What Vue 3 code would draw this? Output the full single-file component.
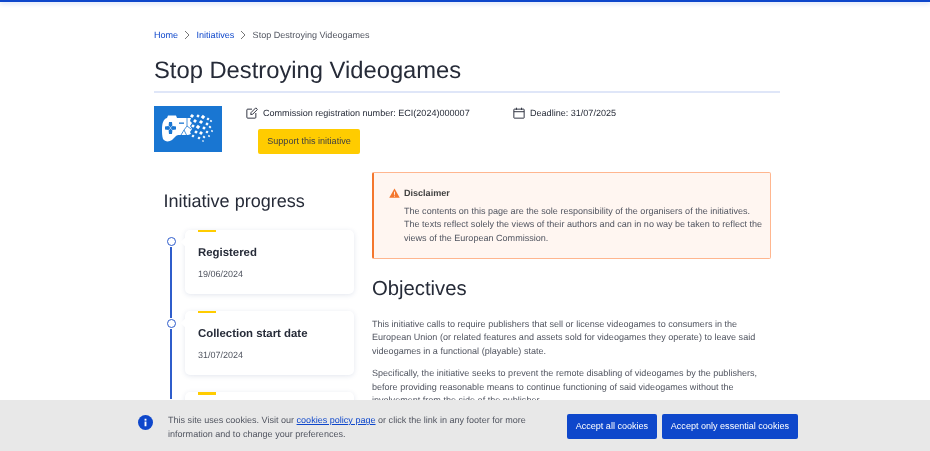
<script setup>
const steps = [
  { title: 'Registered', date: '19/06/2024' },
  { title: 'Collection start date', date: '31/07/2024' },
  { title: 'Collection closed', date: '31/07/2025' },
]
const bits = [[38,10,1.5],[44,10,1.2],[49,11,1.6],[54,13,1.1],[41,15,1.4],[47,16,1.5],[53,18,1.2],[57,15,.9],[39,20,1.3],[44,21,1.6],[50,22,1.3],[56,21,1],[42,26,1.3],[47,27,1.4],[53,26,1.1],[58,25,.8],[39,30,1.1],[45,32,1.1],[50,31,1],[55,30,.8],[49,35,.7]]
</script>

<template>
  <div class="page">
    <div class="topbar"></div>
    <main class="container">
      <nav class="crumbs">
        <a>Home</a>
        <svg class="chev" viewBox="0 0 8 10"><path d="M2 1l4 4-4 4" /></svg>
        <a>Initiatives</a>
        <svg class="chev" viewBox="0 0 8 10"><path d="M2 1l4 4-4 4" /></svg>
        <span>Stop Destroying Videogames</span>
      </nav>
      <h1>Stop Destroying Videogames</h1>
      <div class="meta">
        <svg class="logo" viewBox="0 0 68 46">
          <rect width="68" height="46" fill="#1976d2" />
          <path fill="#fff" d="M13 12l1-2.500h8l1 2.500h14l-1 3 2 2-2 3 2 3-2 3 1 2-3 1H25c-1 0-2 0-3 1l-4 4c-3 2-7 2-9-1-1-3-1-6-1-9 0-6 1-11 5-12z" />
          <path fill="#1976d2" d="M15 16h3l.4 3.500-1.900 1.900-1.900-1.900zM15 28h3l.4-3.500-1.900-1.900-1.900 1.900zM11 20.500v3l3.500.4 1.900-1.900-1.900-1.900zM22 20.500v3l-3.500.4-1.900-1.900 1.900-1.900z" />
          <rect x="25" y="16.500" width="5" height="1.300" fill="#1976d2" />
          <path d="M33 12v8l-3 4 3 6M33 20l4 3M30 24l-3 5" stroke="#1976d2" stroke-width=".8" fill="none" />
          <rect v-for="(b, i) in bits" :key="i" :x="b[0] - b[2]" :y="b[1] - b[2]" :width="b[2] * 2" :height="b[2] * 2" :transform="`rotate(40 ${b[0]} ${b[1]})`" fill="#fff" />
        </svg>
        <div class="meta-body">
          <div class="meta-row">
            <span class="meta-item reg">
              <svg class="ico" viewBox="0 0 14 14"><path d="M7 2.500H2a1 1 0 0 0-1 1V12a1 1 0 0 0 1 1h8.500a1 1 0 0 0 1-1V7M5.500 8.800l.4-2.300L11.400 1l1.900 1.900-5.500 5.500z" /></svg>
              Commission registration number: ECI(2024)000007
            </span>
            <span class="meta-item">
              <svg class="ico" viewBox="0 0 14 14"><path d="M1.500 2.500h11a.5.5 0 0 1 .5.500v9.500a.5.5 0 0 1-.5.500h-11a.5.5 0 0 1-.5-.5V3a.5.5 0 0 1 .5-.5zM1 5.500h12M4 .8v2.500M10 .8v2.500" /></svg>
              Deadline: 31/07/2025
            </span>
          </div>
          <button class="support">Support this initiative</button>
        </div>
      </div>
      <div class="columns">
        <aside class="side">
          <h2>Initiative progress</h2>
          <ol class="timeline">
            <li v-for="s in steps" :key="s.title" class="step">
              <div class="rail"><span class="node"></span><span class="line"></span></div>
              <div class="card">
                <h3>{{ s.title }}</h3>
                <p>{{ s.date }}</p>
              </div>
            </li>
          </ol>
        </aside>
        <section class="content">
          <div class="alert">
            <svg class="warn" viewBox="0 0 12 11"><path d="M6 0.500L11.800 10.800H0.200z" fill="#f4772e" /><path d="M6 4v3.500M6 8.500v1" stroke="#fff6f1" stroke-width="1" /></svg>
            <div>
              <strong>Disclaimer</strong>
              <p>The contents on this page are the sole responsibility of the organisers of the initiatives. The texts reflect solely the views of their authors and can in no way be taken to reflect the views of the European Commission.</p>
            </div>
          </div>
          <h2 class="objectives">Objectives</h2>
          <p class="para">This initiative calls to require publishers that sell or license videogames to consumers in the European Union (or related features and assets sold for videogames they operate) to leave said videogames in a functional (playable) state.</p>
          <p class="para">Specifically, the initiative seeks to prevent the remote disabling of videogames by the publishers, before providing reasonable means to continue functioning of said videogames without the involvement from the side of the publisher.</p>
        </section>
      </div>
    </main>
    <div class="cookies">
      <svg class="info" viewBox="0 0 16 16"><circle cx="8" cy="8" r="8" fill="#0e47cb" /><rect x="7" y="7" width="2" height="5" fill="#fff" /><rect x="7" y="4" width="2" height="2" fill="#fff" /></svg>
      <p>This site uses cookies. Visit our <a>cookies policy page</a> or click the link in any footer for more information and to change your preferences.</p>
      <div class="cookie-actions">
        <button>Accept all cookies</button>
        <button>Accept only essential cookies</button>
      </div>
    </div>
  </div>
</template>

<style>
html, body { margin: 0; overflow: hidden; background: #fff; }
</style>

<style scoped>
.page {
  position: relative;
  width: 930px;
  height: 451px;
  overflow: hidden;
  background: #fff;
  font-family: "Liberation Sans", Arial, sans-serif;
  color: #262b38;
  text-rendering: geometricPrecision;
  filter: blur(.35px);
}
.topbar {
  height: 1.500px;
  background: #0e47cb;
  box-shadow: 0 1px 5px rgba(14, 71, 203, .3);
}
.container { width: 626px; margin-left: 154px; }
.crumbs {
  display: flex;
  align-items: center;
  height: 14px;
  margin-top: 26.500px;
  font-size: 9.050px;
  color: #515560;
}
.crumbs a { color: #0e47cb; }
.chev { width: 8px; height: 10px; margin: 0 5.200px; fill: none; stroke: #666; stroke-width: .9; }
h1 {
  margin: 12px 0 0;
  padding-bottom: 3px;
  border-bottom: 2px solid #dfe6f8;
  font-size: 23.750px;
  line-height: 34px;
  font-weight: 400;
}
.meta { display: flex; margin-top: 13px; }
.logo { width: 68px; height: 46px; flex: none; }
.meta-body { margin-left: 24px; }
.meta-row { display: flex; height: 14px; }
.meta-item { display: flex; align-items: center; gap: 5px; font-size: 9.050px; color: #262b38; }
.reg { width: 267px; }
.ico { width: 12px; height: 12px; fill: none; stroke: #262b38; stroke-width: 1.100; }
.support {
  display: block;
  margin: 9px 0 0 12px;
  width: 102px;
  height: 24.500px;
  padding: 0;
  border: 0;
  border-radius: 2px;
  background: #ffcc00;
  color: #404040;
  font: 9.050px "Liberation Sans", Arial, sans-serif;
}
.columns { display: flex; margin-top: 18px; }
.side { width: 200px; flex: none; }
.side h2 {
  margin: 17px 0 0 9.500px;
  font-size: 18.050px;
  line-height: 24px;
  font-weight: 400;
}
.timeline { margin: 17px 0 0; padding: 0; list-style: none; }
.step { display: flex; height: 81.400px; }
.rail {
  width: 34px;
  margin-right: -3px;
  flex: none;
  display: flex;
  flex-direction: column;
  align-items: center;
  padding-top: 7.800px;
  box-sizing: border-box;
}
.node { width: 9px; height: 9px; flex: none; box-sizing: border-box; border: 1.500px solid #2f5dcb; border-radius: 50%; background: #fff; }
.line { width: 1.300px; flex: 1; margin: 1px 0 -7px; background: #2f5dcb; }
.card {
  position: relative;
  width: 169px;
  height: 64px;
  padding: 16px 13px 0;
  box-sizing: border-box;
  border-radius: 5px;
  background: #fff;
  box-shadow: 0 1px 5px rgba(38, 60, 120, .13);
}
.card::before {
  content: "";
  position: absolute;
  top: 0;
  left: 13px;
  width: 18px;
  height: 2.500px;
  background: #ffcc00;
}
.card::after {
  content: "";
  position: absolute;
  top: 9px;
  left: -3px;
  width: 6px;
  height: 6px;
  background: #fff;
  transform: rotate(45deg);
}
.card h3 { margin: 0; font-size: 11.400px; line-height: 15px; font-weight: 700; }
.card p { margin: 7px 0 0; font-size: 9px; line-height: 13px; color: #515560; }
.content { width: 399px; margin-left: 18px; }
.alert {
  display: flex;
  gap: 4px;
  height: 87px;
  box-sizing: border-box;
  padding: 14px 5px 0 15px;
  border: 1px solid #ffb68f;
  border-left: 2px solid #f4772e;
  border-radius: 2px;
  background: #fff6f1;
  font-size: 9.050px;
  line-height: 13.500px;
  color: #515560;
}
.warn { width: 11px; height: 10px; flex: none; margin-top: 1px; }
.alert strong { display: block; color: #404040; }
.alert p { margin: 4.500px 0 0; }
.objectives {
  margin: 17px 0 0;
  font-size: 20.300px;
  line-height: 26px;
  font-weight: 400;
}
.para {
  margin: 16px 0 0;
  font-size: 9.050px;
  line-height: 13.500px;
  color: #515560;
}
.para + .para { margin-top: 9px; }
.cookies {
  position: absolute;
  left: 0;
  right: 0;
  bottom: 0;
  height: 51px;
  display: flex;
  align-items: flex-start;
  padding: 13.500px 0 0 138px;
  box-sizing: border-box;
  background: #e8e8e8;
}
.info { width: 15px; height: 15px; flex: none; margin: 1.500px 15px 0 0; }
.cookies p {
  width: 384px;
  margin: 0;
  padding-top: .5px;
  font-size: 9.050px;
  line-height: 13.500px;
  color: #515560;
}
.cookies a { color: #0e47cb; text-decoration: underline; }
.cookie-actions { display: flex; gap: 4.700px; margin-left: 14.700px; }
.cookie-actions button {
  height: 25px;
  padding: 0 9px;
  border: 0;
  border-radius: 2px;
  background: #0e47cb;
  color: #fff;
  font: 9.050px "Liberation Sans", Arial, sans-serif;
}
</style>
